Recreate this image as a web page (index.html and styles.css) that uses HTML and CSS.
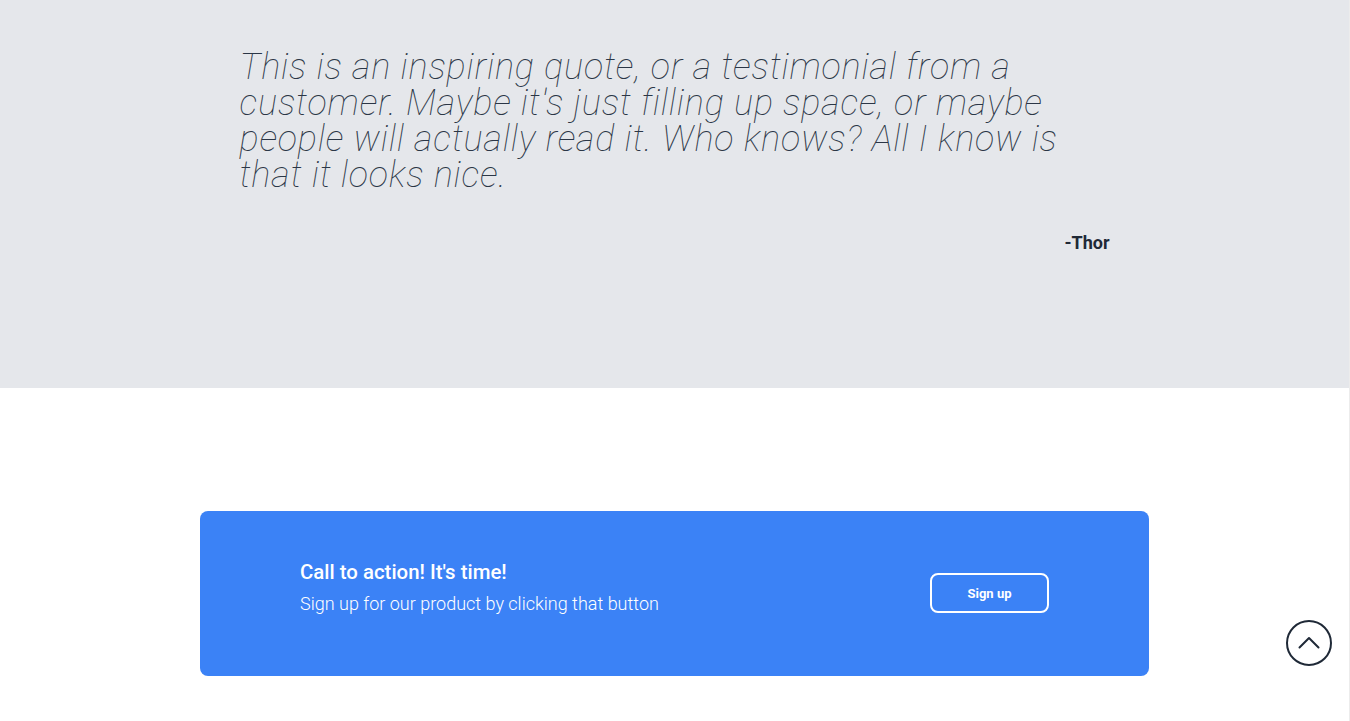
FILE: index.html
```html
<!DOCTYPE html>
<html>
<head>
<meta charset="utf-8">
<link rel="stylesheet" href="styles.css">
</head>
<body>
<div class="page">
  <section class="quote-section">
    <div class="quote-wrap">
      <p class="quote">This is an inspiring quote, or a testimonial from a customer. Maybe it's just filling up space, or maybe people will actually read it. Who knows? All I know is that it looks nice.</p>
      <p class="author">-Thor</p>
    </div>
  </section>
  <section class="cta-section">
    <div class="cta">
      <div class="cta-text">
        <h2 class="cta-title">Call to action! It's time!</h2>
        <p class="cta-sub">Sign up for our product by clicking that button</p>
      </div>
      <button class="cta-btn">Sign up</button>
    </div>
  </section>
</div>
<a class="to-top" href="#">
  <svg width="48" height="48" viewBox="0 0 48 48" fill="none" stroke="#1f2937" stroke-width="2">
    <circle cx="24" cy="24" r="22"/>
    <path d="M14.5 28.5 L24 19 L33.5 28.5" stroke-linecap="round" stroke-linejoin="round"/>
  </svg>
</a>
</body>
</html>
```
FILE: styles.css
```css
html, body {
  margin: 0;
  padding: 0;
}
body {
  font-family: Roboto, "Liberation Sans", sans-serif;
  color: #1f2937;
  background: #fff;
}
.page {
  width: 1349px;
  border-right: 1px solid #ececec;
  min-height: 721px;
}
.quote-section {
  background: #e5e7eb;
  height: 388px;
  box-sizing: border-box;
  padding-top: 49px;
}
.quote-wrap {
  width: 870px;
  margin: 0 auto;
}
.quote {
  margin: 0;
  font-size: 36px;
  line-height: 36px;
  font-style: italic;
  font-weight: 100;
  letter-spacing: 0.8px;
  color: #2b3646;
}
.author {
  margin: 36px 0 0;
  text-align: right;
  font-weight: 700;
  font-size: 18px;
  line-height: 28px;
}
.cta-section {
  padding-top: 123px;
  padding-bottom: 45px;
}
.cta {
  width: 949px;
  height: 165px;
  box-sizing: border-box;
  margin: 0 0 0 200px;
  background: #3b82f6;
  border-radius: 8px;
  display: flex;
  align-items: center;
  justify-content: space-between;
  padding: 0 100px;
  color: #fff;
}
.cta-text {
  padding-bottom: 11px;
}
.cta-title {
  margin: 0;
  font-size: 20.4px;
  line-height: 28px;
  font-weight: 500;
}
.cta-sub {
  margin: 4px 0 0;
  font-size: 18px;
  line-height: 28px;
  font-weight: 300;
}
.cta-btn {
  width: 119px;
  height: 40px;
  box-sizing: border-box;
  border: 2px solid #fff;
  border-radius: 8px;
  background: transparent;
  color: #fff;
  font-family: Roboto, "Liberation Sans", sans-serif;
  font-weight: 700;
  font-size: 13px;
  margin-top: -1px;
}
.to-top {
  position: fixed;
  left: 1285px;
  top: 619px;
  width: 48px;
  height: 48px;
  display: block;
}
```
